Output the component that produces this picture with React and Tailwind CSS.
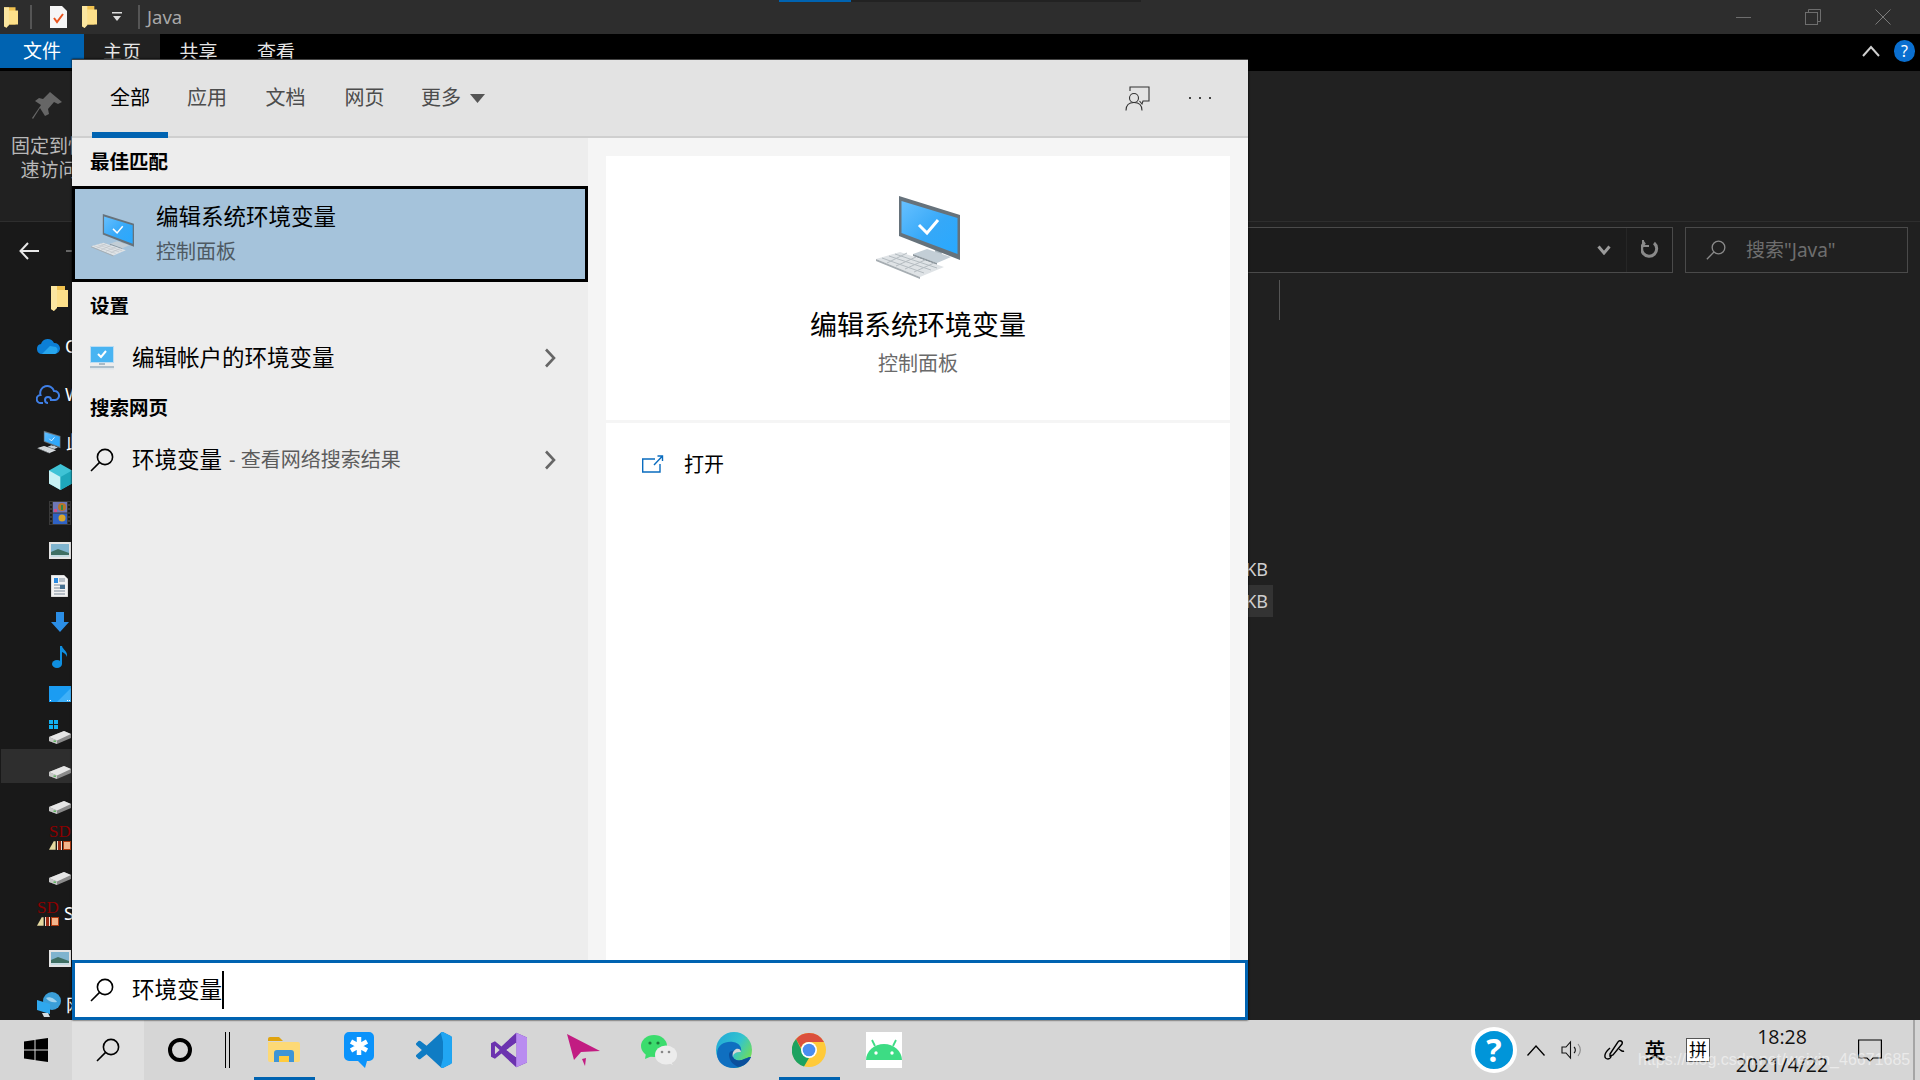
import React from "react";

const SearchGlyph = ({ c = "#000", s = 24 }) => (
  <svg width={s} height={s} viewBox="0 0 24 24" fill="none" stroke={c} strokeWidth="1.6">
    <circle cx="15" cy="9" r="7.6" />
    <path d="M9.6 14.4 1 23" />
  </svg>
);

const Chevron = () => (
  <svg width="12" height="20" viewBox="0 0 12 20" fill="none" stroke="#666" strokeWidth="2.6">
    <path d="M2 1.5 10 10 2 18.5" />
  </svg>
);

const PcIcon = ({ w = 88, h = 84 }) => (
  <svg width={w} height={h} viewBox="35 25 88 84">
    <defs>
      <linearGradient id="scr" x1="0" y1="0" x2="1" y2="1">
        <stop offset="0" stopColor="#66c0ff" />
        <stop offset="0.55" stopColor="#35a8f8" />
        <stop offset="1" stopColor="#28a9ff" />
      </linearGradient>
    </defs>
    <path d="M95 76 97 86 103 86 102 76Z" fill="#a9b6be" />
    <path d="M74 84 88 79 112 87 98 93Z" fill="#c3ced6" />
    <path d="M74 84 98 93 98 95 74 86Z" fill="#8d979e" />
    <path d="M60 26 121 45 121 90 60 66Z" fill="#66727b" />
    <path d="M62.500 31 118.500 48 118.500 84 62.500 63Z" fill="url(#scr)" />
    <path d="M80 55 88 63 99 50" fill="none" stroke="#fff" strokeWidth="3" />
    <path d="M37 89 61 82 105 97 81 107Z" fill="#dfe3e6" />
    <path d="M43 88 85 103M50 86 92 100M56 84 98 98M48 93 68 83M57 96 77 87M66 99 86 90M75 102 95 93" stroke="#b5bcc1" strokeWidth="1" fill="none" />
    <path d="M37 89 81 107 81 109 37 91Z" fill="#a6adb2" />
  </svg>
);

const FlatPc = () => (
  <svg width="24" height="24" viewBox="0 0 24 24">
    <rect x="0" y="0" width="24" height="17" fill="#bcdcf2" />
    <rect x="1" y="1" width="22" height="15" fill="#49b4f2" />
    <path d="M8 8 11 11 16 5" fill="none" stroke="#fff" strokeWidth="2" />
    <rect x="9" y="17" width="6" height="2" fill="#a9bac6" />
    <rect x="0" y="20" width="24" height="2" fill="#aebfcb" />
    <rect x="0" y="22" width="24" height="1.500" fill="#dfe6eb" />
  </svg>
);

const Folder = ({ w = 17, h = 25 }) => (
  <svg width={w} height={h} viewBox="0 0 17 25">
    <path d="M0 0H14V21H3L3 25 0 23Z" fill="#f1c24f" />
    <path d="M6 4 17 4V21H5Z" fill="#fde08a" />
    <path d="M0 0 6 0V22L3 25 0 23Z" fill="#fbe6a0" />
  </svg>
);

const Drive = () => (
  <svg width="22" height="13" viewBox="0 0 22 13">
    <path d="M0 6 15 0 22 3V7L8 13 0 10Z" fill="#8a8a8a" />
    <path d="M0 6 15 0 22 3 8 9.500Z" fill="#e6e6e6" />
    <path d="M0 6 8 9.500V13L0 10Z" fill="#c8c8c8" />
    <rect x="4.500" y="9.500" width="2.500" height="1.300" fill="#4caf50" />
  </svg>
);

const SdIcon = () => (
  <div className="flex flex-col w-[22px] leading-none">
    <span className="text-[17px] leading-[15px] text-[#8b0000] font-['Liberation_Serif',serif] whitespace-nowrap">SD</span>
    <div className="flex gap-[1px] mt-[2px]">
      <svg width="7" height="9" viewBox="0 0 7 9"><path d="M0 9 5 0H7V9Z" fill="#e6d9a0" /></svg>
      <div className="w-[6px] h-[9px] bg-[#9b2a14] border-x border-[#f0e0d0]" />
      <div className="w-[8px] h-[9px] bg-[#f3b58c] border border-[#b03a10]" />
    </div>
  </div>
);

const PicIcon = () => (
  <svg width="22" height="17" viewBox="0 0 22 17">
    <rect width="22" height="17" fill="#e4e4e4" />
    <rect x="2" y="2" width="18" height="13" fill="#7fb4cf" />
    <path d="M2 10 9 7 20 11V15H2Z" fill="#3f6f63" />
    <path d="M2 13H20V15H2Z" fill="#c5dbe2" />
  </svg>
);

const sideRows = [
  { cls: "mt-[3px] pl-[51px]", icon: <Folder /> },
  { cls: "mt-[18px] pl-[36px]", icon: (
    <svg width="24" height="16" viewBox="0 0 24 16">
      <path d="M6 16a5 5 0 0 1-1-9.900A7 7 0 0 1 18 5a5.500 5.500 0 0 1 1 11Z" fill="#0c7fd6" />
      <path d="M6 16 14 8l6 1a4 4 0 0 1-1 7Z" fill="#27a6ee" />
    </svg>
  ), label: "OneDrive" },
  { cls: "mt-[18px] pl-[36px]", icon: (
    <svg width="24" height="22" viewBox="0 0 24 22" fill="none" stroke="#3f7fe6" strokeWidth="2">
      <path d="M7 20H5a4 4 0 0 1-.5-8A7 7 0 0 1 18 8a4.500 4.500 0 0 1 1 9h-4a3 3 0 1 0-3 3" />
    </svg>
  ), label: "WPS网盘" },
  { cls: "mt-[18px] pl-[37px]", icon: <PcIcon w={24} h={24} />, label: "此电脑" },
  { cls: "mt-[5px] pl-[49px]", icon: (
    <svg width="23" height="26" viewBox="0 0 23 26">
      <path d="M11.500 0 23 6.500V19.500L11.500 26 0 19.500V6.500Z" fill="#3fc3d6" />
      <path d="M0 6.500 11.500 13V26L0 19.500Z" fill="#c8f1f4" />
      <path d="M11.500 13 23 6.500V19.500L11.500 26Z" fill="#1ea7bb" />
    </svg>
  ) },
  { cls: "mt-[6px] pl-[49px]", icon: (
    <svg width="22" height="24" viewBox="0 0 22 24">
      <rect width="22" height="24" fill="#3a3a3a" />
      <path d="M1 2H3M1 6H3M1 10H3M1 14H3M1 18H3M1 22H3M19 2H21M19 6H21M19 10H21M19 14H21M19 18H21M19 22H21" stroke="#111" strokeWidth="1.500" />
      <rect x="4" y="1" width="14" height="10.500" fill="#6f78b8" />
      <rect x="4" y="12.500" width="14" height="10.500" fill="#2f62c4" />
      <circle cx="13" cy="6" r="4" fill="#b8742a" />
      <rect x="12" y="4" width="2" height="5" fill="#2f8a4a" />
      <circle cx="13" cy="17" r="3.500" fill="#d9a52a" />
      <rect x="5" y="8" width="3" height="3" fill="#d0508a" />
    </svg>
  ) },
  { cls: "mt-[7px] pl-[49px]", icon: <PicIcon /> },
  { cls: "mt-[6px] pl-[51px]", icon: (
    <svg width="17" height="22" viewBox="0 0 17 22">
      <path d="M0 0H13L17 4V22H0Z" fill="#f2f2f2" stroke="#999" strokeWidth="0.500" />
      <path d="M3 3H7V8H3Z" fill="#2a8ae0" />
      <path d="M8 4H14M8 6H14M3 10H14M3 13H14M3 16H14M3 19H14" stroke="#7a8a9a" strokeWidth="1" />
      <rect x="9" y="10" width="5" height="4" fill="#46708f" />
    </svg>
  ) },
  { cls: "mt-[6px] pl-[51px]", icon: (
    <svg width="18" height="20" viewBox="0 0 18 20">
      <path d="M5 0H13V10H18L9 20 0 10H5Z" fill="#2b8ee6" />
    </svg>
  ) },
  { cls: "mt-[5px] pl-[52px]", icon: (
    <svg width="16" height="22" viewBox="0 0 16 22" fill="#0f8fe0">
      <ellipse cx="5" cy="18" rx="5" ry="4" />
      <rect x="8" y="0" width="2" height="18" />
      <path d="M10 0c1 4 6 5 5 11-1-3-3-4-5-5Z" />
    </svg>
  ) },
  { cls: "mt-[7px] pl-[49px]", icon: (
    <svg width="22" height="16" viewBox="0 0 22 16">
      <rect width="22" height="16" fill="#1b9cf2" />
      <path d="M8 16 22 2V16Z" fill="#3fb0f8" />
      <rect x="1" y="14" width="1" height="1" fill="#fff" />
      <rect x="18" y="14" width="1" height="1" fill="#fff" />
      <rect x="20" y="14" width="1" height="1" fill="#fff" />
    </svg>
  ) },
  { cls: "mt-[8px] pl-[49px]", icon: (
    <div className="relative w-[23px] h-[24px] flex items-end">
      <Drive />
      <div className="absolute top-0 left-0 grid grid-cols-2 gap-[1px] w-[9px]">
        <i className="h-[4px] bg-[#12b0f0]" /><i className="h-[4px] bg-[#12b0f0]" /><i className="h-[4px] bg-[#12b0f0]" /><i className="h-[4px] bg-[#12b0f0]" />
      </div>
    </div>
  ) },
  { cls: "mt-[2px] h-[34px] pt-[12px] pl-[48px] bg-[#2e2e2e] ml-[1px]", icon: <Drive />, tall: true },
  { cls: "mt-[9px] pl-[49px]", icon: <Drive /> },
  { cls: "mt-0 pl-[49px]", icon: <SdIcon /> },
  { cls: "mt-[11px] pl-[49px]", icon: <Drive /> },
  { cls: "mt-[5px] pl-[37px]", icon: <SdIcon />, label: "SD" },
  { cls: "mt-[15px] pl-[49px]", icon: <PicIcon /> },
  { cls: "mt-[17px] pl-[37px]", icon: (
    <svg width="24" height="26" viewBox="0 0 24 26">
      <circle cx="15" cy="9" r="9" fill="#3a9ed8" />
      <path d="M9 6c4-2 9 1 11 4-4 1-8 0-11-4Z" fill="#9fd2ee" />
      <path d="M0 8 13 12V22L0 18Z" fill="#2fa8ee" />
      <path d="M5 21H11L13 25H7Z" fill="#d5dde2" />
    </svg>
  ), label: "网络" },
];

const TaskIcons = [
  { key: "folder", on: true, el: (
    <svg width="32" height="26" viewBox="0 0 32 26">
      <path d="M0 2a2 2 0 0 1 2-2H11L15 4H0Z" fill="#e0a30e" />
      <path d="M0 5H30a2 2 0 0 1 2 2V23a2 2 0 0 1-2 2H2a2 2 0 0 1-2-2Z" fill="#fdd976" />
      <path d="M6 25V16a3 3 0 0 1 3-3H23a3 3 0 0 1 3 3V25H21V19H11V25Z" fill="#3f95d6" />
      <rect x="11" y="19" width="10" height="6" fill="#ffcb3d" />
    </svg>
  ) },
  { key: "meet", el: (
    <svg width="30" height="36" viewBox="0 0 30 36">
      <path d="M5 0H25a5 5 0 0 1 5 5V24a5 5 0 0 1-5 5H23L21 36 14 29H5a5 5 0 0 1-5-5V5a5 5 0 0 1 5-5Z" fill="#0b93fb" />
      <path d="M15 5V23M7 9.500 23 18.500M23 9.500 7 18.500" stroke="#fff" strokeWidth="4.500" />
    </svg>
  ) },
  { key: "code", el: (
    <svg width="36" height="36" viewBox="0 0 100 100">
      <path d="M70.900 99.300a6.200 6.200 0 0 0 4.900-.2l20.600-9.900a6.200 6.200 0 0 0 3.500-5.600V16.400a6.200 6.200 0 0 0-3.500-5.600L75.800.9a6.200 6.200 0 0 0-7.100 1.200L29.400 38 12.200 25a4.200 4.200 0 0 0-5.300.2L1.400 30.300a4.200 4.200 0 0 0 0 6.200L16.300 50 1.400 63.500a4.200 4.200 0 0 0 0 6.200l5.500 5a4.200 4.200 0 0 0 5.300.2l17.200-13 39.300 35.900a6.200 6.200 0 0 0 2.200 1.500ZM75 27.300 45.100 50 75 72.700Z" fill="#0f7cc4" />
      <path d="M75.800.9 96.400 10.800a6.200 6.200 0 0 1 3.500 5.600V83.600a6.200 6.200 0 0 1-3.500 5.600L75.800 99.100a6.200 6.200 0 0 1-7.100-1.200L75 72.700V27.300L68.700 2.100A6.200 6.200 0 0 1 75.800.9Z" fill="#21a6f3" />
    </svg>
  ) },
  { key: "vs", el: (
    <svg width="36" height="36" viewBox="0 0 100 100">
      <path d="M70 2 29 40 11 26 0 31V69L11 74 29 60 70 98 100 85V15ZM70 30V70L43 50ZM11 38 24 50 11 62Z" fill="#6c33af" />
      <path d="M70 2 100 15V85L70 98Z" fill="#b98cf0" />
      <path d="M70 30V70L43 50Z" fill="#d6d6d6" />
    </svg>
  ) },
  { key: "plane", el: (
    <svg width="34" height="33" viewBox="0 0 34 33">
      <path d="M0 0 33 17 14 18 7 26Z" fill="#c21c82" />
      <path d="M15 25 19 24 18 32Z" fill="#c21c82" />
    </svg>
  ) },
  { key: "wechat", el: (
    <svg width="36" height="30" viewBox="0 0 36 30">
      <ellipse cx="13" cy="11" rx="13" ry="11" fill="#3bdc6d" />
      <path d="M5 18 4 24 11 21Z" fill="#3bdc6d" />
      <circle cx="9" cy="8" r="1.600" fill="#1c7a3c" />
      <circle cx="17" cy="8" r="1.600" fill="#1c7a3c" />
      <ellipse cx="25" cy="20" rx="11" ry="9.500" fill="#ececec" />
      <path d="M30 27 32 30 27 28Z" fill="#ececec" />
      <circle cx="21" cy="17" r="1.300" fill="#888" />
      <circle cx="28" cy="17" r="1.300" fill="#888" />
    </svg>
  ) },
  { key: "edge", el: (
    <svg width="36" height="36" viewBox="0 0 36 36">
      <defs>
        <linearGradient id="eg" x1="0" y1="0" x2="1" y2="0.600">
          <stop offset="0" stopColor="#1fa7d8" />
          <stop offset="0.600" stopColor="#33c3cf" />
          <stop offset="1" stopColor="#6fdc5c" />
        </linearGradient>
      </defs>
      <circle cx="18" cy="18" r="18" fill="url(#eg)" />
      <path d="M1 22C1 12 10 9 17 10c7 1 9 6 8 10-5 0-9 1-8 5 1 3 5 4 9 3 3-1 6-3 9-3-3 7-10 11-17 11C8 36 1 30 1 22Z" fill="#0f6fc0" />
      <path d="M13 22c0 6 3 10 9 13 6-1 10-4 13-10-3 0-6 2-9 3-4 1-8 0-9-3-1-2 0-5 3-6-3-1-7 0-7 3Z" fill="#0b4f9c" />
      <path d="M25 20c-4 0-8 1-8 5 0 0-2-5 3-8 2-1 5 0 5 3Z" fill="#d6d6d6" />
    </svg>
  ) },
  { key: "chrome", on: true, el: (
    <svg width="34" height="34" viewBox="0 0 34 34">
      <circle cx="17" cy="17" r="17" fill="#ffca3a" />
      <path d="M17 0A17 17 0 0 1 32 9H17A8 8 0 0 0 9 15L4 6A17 17 0 0 1 17 0Z" fill="#db4f3d" />
      <path d="M4 6 10.500 19A8 8 0 0 0 17 25L12 33.500A17 17 0 0 1 4 6Z" fill="#1da260" />
      <circle cx="17" cy="17" r="8" fill="#fff" />
      <circle cx="17" cy="17" r="6.300" fill="#4a8df0" />
    </svg>
  ) },
  { key: "android", el: (
    <div className="w-[36px] h-[36px] bg-white">
      <svg width="36" height="36" viewBox="0 0 36 36">
        <path d="M0 28A18 16 0 0 1 36 28Z" fill="#3ddc84" />
        <path d="M9 14 6 8M27 14 30 8" stroke="#3ddc84" strokeWidth="1.800" />
        <circle cx="10" cy="21" r="1.700" fill="#fff" />
        <circle cx="26" cy="21" r="1.700" fill="#fff" />
      </svg>
    </div>
  ) },
];

const tabs = [
  { t: "全部", cls: "w-[76px] ml-[20px] text-black", active: true },
  { t: "应用", cls: "w-[78px] text-[#4c4c4c]" },
  { t: "文档", cls: "w-[79px] text-[#4c4c4c]" },
  { t: "网页", cls: "w-[79px] text-[#4c4c4c]" },
];

export default function App() {
  return (
    <div className="relative w-[1920px] h-[1080px] overflow-hidden flex flex-col bg-[#202020] font-['Noto_Sans','Noto_Sans_CJK_SC',sans-serif]">
      {/* title bar */}
      <div className="relative h-[34px] shrink-0 bg-[#2d2d2d] flex items-center">
        <div className="ml-[4px] flex items-center"><Folder w={14} h={21} /></div>
        <div className="ml-[12px] w-[2px] h-[24px] bg-[#555]" />
        <div className="ml-[18px]">
          <svg width="17" height="22" viewBox="0 0 17 22">
            <path d="M0 0H12L17 5V22H0Z" fill="#f6f6f6" />
            <path d="M4 12 7 16 13 8" fill="none" stroke="#e8541e" strokeWidth="2" />
          </svg>
        </div>
        <div className="ml-[15px]"><Folder w={15} h={22} /></div>
        <div className="ml-[15px]">
          <svg width="10" height="10" viewBox="0 0 10 10" fill="#ddd"><rect y="0" width="10" height="1.500" /><path d="M1 4H9L5 9Z" /></svg>
        </div>
        <div className="ml-[16px] w-[2px] h-[24px] bg-[#555]" />
        <span className="ml-[7px] text-[18.500px] leading-none text-[#a8a8a8]">Java</span>
        <div className="absolute top-0 left-[779px] w-[362px] h-[2px] bg-[#222]" />
        <div className="absolute top-0 left-[779px] w-[72px] h-[2px] bg-[#0063b1]" />
        <div className="ml-auto flex items-center pr-[29px] gap-[54px]">
          <div className="w-[15px] h-[1px] bg-[#6e6e6e]" />
          <svg width="16" height="16" viewBox="0 0 16 16" fill="none" stroke="#6e6e6e"><rect x="0.500" y="3.500" width="12" height="12" /><path d="M3.500 3V.5H15.500V12.500H13" /></svg>
          <svg width="16" height="16" viewBox="0 0 16 16" fill="none" stroke="#7a7a7a"><path d="M.5.5 15.500 15.500M15.500.5 .5 15.500" /></svg>
        </div>
      </div>
      {/* ribbon tabs */}
      <div className="h-[37px] shrink-0 bg-black flex items-start text-[19px] leading-none">
        <div className="w-[84px] h-[34px] bg-[#0063b1] text-white flex items-center justify-center">文件</div>
        <div className="w-[76px] h-[37px] bg-[#212121] text-[#e6e6e6] flex items-center justify-center">主页</div>
        <div className="w-[77px] h-[37px] text-[#e6e6e6] flex items-center justify-center">共享</div>
        <div className="w-[78px] h-[37px] text-[#e6e6e6] flex items-center justify-center">查看</div>
        <div className="ml-auto h-[34px] flex items-center pr-[5px] gap-[14px]">
          <svg width="18" height="12" viewBox="0 0 18 12" fill="none" stroke="#cfcfcf" strokeWidth="2"><path d="M1 11 9 2 17 11" /></svg>
          <div className="w-[21px] h-[22px] rounded-full bg-[#0a6fd0] text-white text-[16px] flex items-center justify-center">?</div>
        </div>
      </div>
      {/* ribbon panel */}
      <div className="h-[150px] shrink-0 bg-[#212121] flex flex-col">
        <div className="w-[96px] ml-[1px] flex flex-col items-center pt-[21px] text-[19px] leading-[24px] text-[#b8b8b8]">
          <svg className="mr-[4px]" width="30" height="28" viewBox="0 0 30 28" fill="#666">
            <path d="M18 0 30 10 26 12 22 10 16 17 17 22 13 24 8 16 1 27 0 26 9 13 3 9 7 6 11 7 18 0Z" />
          </svg>
          <span className="mt-[14px] whitespace-nowrap">固定到快</span>
          <span className="whitespace-nowrap">速访问</span>
        </div>
      </div>
      {/* address row */}
      <div className="h-[59px] shrink-0 flex border-t border-[#2e2e2e] bg-[#202020]">
        <div className="w-[200px] bg-[#191919] flex items-center pl-[19px] gap-[27px]">
          <svg width="20" height="18" viewBox="0 0 20 18" fill="none" stroke="#e8e8e8" strokeWidth="2"><path d="M20 9H2M9 1 1.500 9 9 17" /></svg>
          <svg width="20" height="18" viewBox="0 0 20 18" fill="none" stroke="#666" strokeWidth="2"><path d="M0 9H18M11 1 18.500 9 11 17" /></svg>
        </div>
        <div className="mt-[5px] w-[1473px] h-[46px] bg-[#1c1c1c] border border-[#4a4a4a] flex items-center justify-end">
          <svg width="14" height="10" viewBox="0 0 14 10" fill="none" stroke="#9a9a9a" strokeWidth="3"><path d="M1.500 1.500 7 8 12.500 1.500" /></svg>
          <div className="ml-[15px] w-[46px] h-full border-l border-[#262626] flex items-center justify-center">
            <svg width="18" height="20" viewBox="0 0 18 20" fill="none" stroke="#8a8a8a" strokeWidth="3"><path d="M4 2.500A7.500 7.500 0 1 0 13 3" /><path d="M2 0V6H8" strokeWidth="2" /></svg>
          </div>
        </div>
        <div className="mt-[5px] ml-[12px] w-[223px] h-[46px] border border-[#4a4a4a] flex items-center pl-[20px]">
          <SearchGlyph c="#8a8a8a" s={20} />
          <span className="ml-[20px] text-[19px] leading-none text-[#6e6e6e] whitespace-nowrap">搜索"Java"</span>
        </div>
      </div>
      {/* main */}
      <div className="flex-1 flex min-h-0">
        <div className="w-[310px] shrink-0 bg-[#191919] flex flex-col text-white text-[18px] leading-none overflow-hidden">
          {sideRows.map((r, i) => (
            <div key={i} className={`flex items-center shrink-0 whitespace-nowrap ${r.tall ? "" : "h-[30px]"} ${r.cls}`}>
              {r.icon}
              {r.label && <span className="ml-[5px]">{r.label}</span>}
            </div>
          ))}
        </div>
        <div className="flex-1 flex flex-col bg-[#202020]">
          <div className="w-[970px] h-[40px] border-r border-[#555] shrink-0" />
          <div className="mt-[233px] w-[963px] h-[32px] flex items-center justify-end pr-[5px] text-[18px] text-[#cfcfcf] leading-none">KB</div>
          <div className="w-[963px] h-[32px] bg-[#333] flex items-center justify-end pr-[5px] text-[18px] text-[#cfcfcf] leading-none">KB</div>
        </div>
      </div>
      {/* taskbar */}
      <div className="h-[60px] shrink-0 bg-[#d6d6d6] flex items-stretch text-black">
        <div className="w-[72px] flex items-center justify-center">
          <svg width="24" height="24" viewBox="0 0 24 24" fill="#000">
            <path d="M0 3.500 10.500 2V11.500H0ZM11.500 1.800 24 0V11.500H11.500ZM0 12.500H10.500V22L0 20.500ZM11.500 12.500H24V24L11.500 22.200Z" />
          </svg>
        </div>
        <div className="w-[72px] bg-[#e0e0e0] flex items-center justify-center"><SearchGlyph /></div>
        <div className="w-[72px] flex items-center justify-center">
          <div className="w-[24px] h-[24px] rounded-full border-[4px] border-black" />
        </div>
        <div className="w-[30px] flex items-center pl-[9px] gap-[3px]">
          <div className="w-[1px] h-[36px] bg-black" />
          <div className="w-[1px] h-[36px] bg-black" />
        </div>
        {TaskIcons.map((t) => (
          <div key={t.key} className="relative w-[75px] flex items-center justify-center">
            {t.el}
            {t.on && <div className="absolute bottom-0 left-[8px] w-[61px] h-[3px] bg-[#0063b1]" />}
          </div>
        ))}
        <div className="flex-1" />
        <div className="w-[46px] flex items-center">
          <div className="w-[46px] h-[46px] rounded-full border-[4px] border-white bg-[#0095d9] text-white text-[32px] font-bold flex items-center justify-center leading-none">?</div>
        </div>
        <div className="w-[38px] flex items-center justify-center">
          <svg width="18" height="11" viewBox="0 0 18 11" fill="none" stroke="#000" strokeWidth="1.300"><path d="M.5 10.500 9 1 17.500 10.500" /></svg>
        </div>
        <div className="w-[34px] flex items-center justify-center">
          <svg width="22" height="20" viewBox="0 0 22 20" fill="none" stroke="#111" strokeWidth="1.100">
            <path d="M1 7H5L9.500 2V18L5 13H1Z" /><path d="M13 7a4 4 0 0 1 0 6" /><path d="M17 4a9 9 0 0 1 0 12" stroke="#888" />
          </svg>
        </div>
        <div className="w-[50px] flex items-center justify-center">
          <svg width="22" height="22" viewBox="0 0 22 22" fill="none" stroke="#000" strokeWidth="1.400">
            <path d="M7 15 15 3a2 2 0 0 1 4 2L10 16l-3 1Z" /><path d="M16 10c3 2 3 3 5 2M7 9c-7 6-6 11-2 11 2 0 3-2 3-3" />
          </svg>
        </div>
        <div className="w-[32px] flex items-center justify-center text-[21px] font-medium leading-none">英</div>
        <div className="w-[54px] flex items-center justify-center">
          <div className="w-[24px] h-[24px] bg-white border border-[#555] text-[18px] leading-none flex items-center justify-center">拼</div>
        </div>
        <div className="w-[114px] flex flex-col items-center justify-center pt-[1px] text-[19.500px] leading-[28px] text-[#111] font-['Open_Sans',sans-serif] whitespace-nowrap">
          <span>18:28</span>
          <span>2021/4/22</span>
        </div>
        <div className="w-[62px] flex items-center justify-center pb-[1px]">
          <svg width="24" height="24" viewBox="0 0 24 24" fill="none" stroke="#000" strokeWidth="1.200">
            <path d="M.6 2H23.400V20H15L12 23 9 20H.6Z" />
          </svg>
        </div>
        <div className="w-[12px]" />
        <div className="w-[2px] bg-[#a5a5a5]" />
        <div className="w-[5px]" />
      </div>

      {/* watermark */}
      <div className="absolute left-[1638px] top-[1050px] text-[16px] leading-[20px] text-white/50 font-['Liberation_Sans',sans-serif] whitespace-nowrap">https://blog.csdn.net/weixin_46671685</div>

      {/* search flyout */}
      <div className="absolute left-[72px] top-[59px] w-[1176px] h-[961px] flex flex-col border-t border-[#444] shadow-[0_0_2px_#000]">
        <div className="h-[78px] shrink-0 bg-[#e3e3e3] border-b-2 border-[#cfcfcf] flex items-center text-[20px] leading-none">
          {tabs.map((t) => (
            <div key={t.t} className={`relative h-full flex items-center justify-center ${t.cls}`}>
              {t.t}
              {t.active && <div className="absolute bottom-[-2px] left-0 w-full h-[6px] bg-[#0063b1]" />}
            </div>
          ))}
          <div className="ml-[17px] flex items-center text-[#4c4c4c]">
            <span>更多</span>
            <svg className="ml-[9px]" width="15" height="9" viewBox="0 0 15 9" fill="#555"><path d="M0 0H15L7.500 9Z" /></svg>
          </div>
          <div className="ml-auto flex items-center">
            <svg width="25" height="25" viewBox="0 0 25 25" fill="none" stroke="#333" strokeWidth="1.100">
              <path d="M5 5V1H24V15H18L17 18 14.500 15" />
              <circle cx="9" cy="12" r="4.500" />
              <path d="M1 24.500c0-5 3-8 8-8s8 3 8 8" />
            </svg>
            <div className="ml-[39px] mr-[37px] flex gap-[8px]">
              <i className="w-[2px] h-[2px] bg-[#444]" /><i className="w-[2px] h-[2px] bg-[#444]" /><i className="w-[2px] h-[2px] bg-[#444]" />
            </div>
          </div>
        </div>
        <div className="flex-1 flex min-h-0">
          <div className="w-[516px] shrink-0 bg-[#ededed] flex flex-col text-black">
            <div className="h-[48px] flex items-center pl-[18px] text-[19.500px] font-bold leading-none">最佳匹配</div>
            <div className="h-[96px] bg-[#a5c3db] border-[3px] border-black flex items-center">
              <div className="ml-[15px] w-[45px] flex justify-center pt-[2px]"><PcIcon w={46} h={44} /></div>
              <div className="ml-[21px] flex flex-col">
                <span className="text-[22.500px] leading-[30px]">编辑系统环境变量</span>
                <span className="mt-[6px] text-[20px] leading-[28px] text-[#4e5a63]">控制面板</span>
              </div>
            </div>
            <div className="h-[48px] flex items-center pl-[18px] text-[19.500px] font-bold leading-none">设置</div>
            <div className="h-[56px] flex items-center pl-[18px] pr-[32px]">
              <FlatPc />
              <span className="ml-[18px] text-[22.500px] leading-none">编辑帐户的环境变量</span>
              <div className="ml-auto"><Chevron /></div>
            </div>
            <div className="h-[44px] flex items-center pl-[18px] text-[19.500px] font-bold leading-none">搜索网页</div>
            <div className="h-[60px] flex items-center pl-[18px] pr-[32px]">
              <SearchGlyph />
              <span className="ml-[18px] text-[22.500px] leading-none">环境变量</span>
              <span className="ml-[7px] text-[20px] leading-none text-[#5c5c5c]">- 查看网络搜索结果</span>
              <div className="ml-auto"><Chevron /></div>
            </div>
          </div>
          <div className="flex-1 bg-[#f5f5f5] flex flex-col pt-[18px] pl-[18px] pr-[18px]">
            <div className="h-[264px] bg-white flex flex-col items-center pt-[39px]">
              <PcIcon />
              <span className="mt-[28px] text-[27px] leading-[36px] text-black">编辑系统环境变量</span>
              <span className="mt-[7px] text-[20px] leading-[28px] text-[#6a6a6a]">控制面板</span>
            </div>
            <div className="flex-1 mt-[3px] bg-white pl-[36px] pt-[28px] flex items-start">
              <div className="flex items-center h-[28px]">
                <svg className="mb-[3px]" width="22" height="18" viewBox="0 0 22 18" fill="none" stroke="#0a6cbf" strokeWidth="1.400">
                  <path d="M13 4H.7V17H18V9" /><path d="M12 10 20 1.500M15.500 1H20.500V6" />
                </svg>
                <span className="ml-[20px] text-[20px] leading-none text-black">打开</span>
              </div>
            </div>
          </div>
        </div>
        <div className="h-[60px] shrink-0 bg-white border-[3px] border-[#0063b1] flex items-center pl-[15px]">
          <SearchGlyph />
          <span className="ml-[18px] pt-[1px] text-[22.500px] leading-none text-black">环境变量</span>
          <div className="w-[2px] h-[38px] bg-black" />
        </div>
      </div>
    </div>
  );
}
